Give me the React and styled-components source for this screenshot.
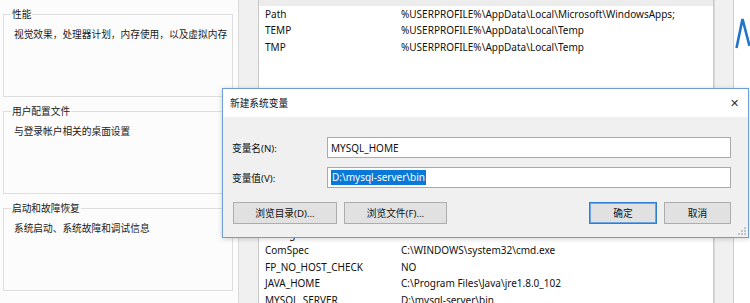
import styled, { createGlobalStyle } from 'styled-components'

const GlobalStyle = createGlobalStyle`
  html, body {
    margin: 0;
    padding: 0;
    background: #fff;
  }
  body {
    font-family: "Noto Sans", "Noto Sans CJK SC", sans-serif;
    color: #111;
  }
`

const Screen = styled.div`
  position: relative;
  width: 750px;
  height: 303px;
  overflow: hidden;
  display: flex;
  background: #fff;
`

/* left window: system properties, advanced tab */
const LeftPane = styled.div`
  width: 238px;
  flex: none;
  box-sizing: border-box;
  padding: 8px 5px 0 3px;
  display: flex;
  flex-direction: column;
  gap: 8px;
  background: #fcfcfc;
`

const Group = styled.fieldset`
  margin: 0;
  height: 89px;
  min-width: 0;
  box-sizing: border-box;
  border: 1px solid #dedede;
  padding: 8px 6px 0 10px;
`

const GroupTitle = styled.legend`
  margin-left: -3px;
  padding: 0 1px;
  font-family: "Noto Sans CJK SC", sans-serif;
  font-size: 9.7px;
  line-height: 12px;
  color: #1a1a1a;
`

const GroupText = styled.div`
  font-family: "Noto Sans CJK SC", sans-serif;
  font-size: 9.7px;
  line-height: 12px;
  color: #1a1a1a;
  white-space: nowrap;
`

/* environment variables window behind the dialog */
const FrameStrip = styled.div`
  width: 20px;
  flex: none;
  box-sizing: border-box;
  background: #f0f0f0;
  border-left: 1px solid #d9d9d9;
  border-right: ${(p) => (p.$right ? '1px solid #cfcfcf' : 'none')};
`

const CenterCol = styled.div`
  width: 456px;
  flex: none;
  display: flex;
  flex-direction: column;
  background: #f0f0f0;
`

const ListBox = styled.div`
  box-sizing: border-box;
  background: #fff;
  border: 1px solid #c9c9c9;
  margin-top: ${(p) => p.$top}px;
  height: ${(p) => (p.$height ? `${p.$height}px` : 'auto')};
  flex: ${(p) => (p.$height ? 'none' : '1')};
  border-bottom: ${(p) => (p.$height ? '1px solid #c9c9c9' : 'none')};
`

const Row = styled.div`
  display: grid;
  grid-template-columns: 136px 1fr;
  height: 16.5px;
  line-height: 16.5px;
  padding-left: 6px;
  font-size: 10px;
  color: #111;
  white-space: nowrap;
  background: ${(p) => (p.$selected ? '#ececec' : 'transparent')};
`

const Desktop = styled.div`
  flex: 1;
  background: #fff;
  padding-top: 16px;
  padding-left: 1px;
`

/* the new system variable dialog */
const Dialog = styled.div`
  position: absolute;
  left: 222px;
  top: 88px;
  width: 527px;
  height: 150px;
  box-sizing: border-box;
  border: 1px solid #6f9dd8;
  background: #f0f0f0;
  box-shadow: 0 1px 5px rgba(0, 0, 0, 0.18);
  display: flex;
  flex-direction: column;
  font-family: "Noto Sans", "Noto Sans CJK SC", sans-serif;
`

const TitleBar = styled.div`
  height: 28px;
  flex: none;
  display: flex;
  align-items: center;
  justify-content: space-between;
  padding-left: 7px;
  background: #fff;
`

const Title = styled.span`
  font-family: "Noto Sans CJK SC", sans-serif;
  font-size: 9.7px;
  color: #111;
`

const CloseButton = styled.span`
  width: 27px;
  text-align: center;
  font-family: "DejaVu Sans", sans-serif;
  font-size: 11px;
  color: #333;
`

const Body = styled.div`
  flex: 1;
  display: flex;
  flex-direction: column;
  padding: 20px 17px 0 9px;
`

const FieldRow = styled.div`
  display: flex;
  align-items: center;
  margin-top: ${(p) => p.$gap || 0}px;
`

const Label = styled.span`
  width: 95px;
  flex: none;
  font-size: 9.7px;
  color: #111;
`

const TextBox = styled.div`
  flex: 1;
  height: 21px;
  box-sizing: border-box;
  border: 1px solid #a9a9a9;
  background: #fff;
  display: flex;
  align-items: center;
  padding-left: 3px;
  font-size: 10px;
  color: #111;
`

const Selection = styled.span`
  background: #0a78d7;
  color: #fff;
  line-height: 15px;
  padding: 0 1px;
`

const ButtonRow = styled.div`
  display: flex;
  gap: 7px;
  margin-top: 14px;
  padding-left: 1px;
`

const Button = styled.div`
  width: ${(p) => p.$w}px;
  height: 22px;
  box-sizing: border-box;
  border: 1px solid ${(p) => (p.$primary ? '#2c7fd2' : '#adadad')};
  box-shadow: ${(p) => (p.$primary ? 'inset 0 0 0 1px #6aa6e6' : 'none')};
  background: #e1e1e1;
  display: flex;
  align-items: center;
  justify-content: center;
  font-size: 9.7px;
  color: #111;
`

const Spacer = styled.div`
  flex: 1;
`

const Grip = styled.svg`
  position: absolute;
  right: 1px;
  bottom: 1px;
`

const userVars = [
  ['', '', true],
  ['Path', '%USERPROFILE%\\AppData\\Local\\Microsoft\\WindowsApps;'],
  ['TEMP', '%USERPROFILE%\\AppData\\Local\\Temp'],
  ['TMP', '%USERPROFILE%\\AppData\\Local\\Temp'],
]

const systemVars = [
  ['变量', '值'],
  ['asl.log', 'Destination=file'],
  ['ComSpec', 'C:\\WINDOWS\\system32\\cmd.exe'],
  ['FP_NO_HOST_CHECK', 'NO'],
  ['JAVA_HOME', 'C:\\Program Files\\Java\\jre1.8.0_102'],
  ['MYSQL_SERVER', 'D:\\mysql-server\\bin'],
]

const App = () => {
  return (
    <Screen>
      <GlobalStyle />
      <LeftPane>
        <Group>
          <GroupTitle>性能</GroupTitle>
          <GroupText>视觉效果，处理器计划，内存使用，以及虚拟内存</GroupText>
        </Group>
        <Group>
          <GroupTitle>用户配置文件</GroupTitle>
          <GroupText>与登录帐户相关的桌面设置</GroupText>
        </Group>
        <Group>
          <GroupTitle>启动和故障恢复</GroupTitle>
          <GroupText>系统启动、系统故障和调试信息</GroupText>
        </Group>
      </LeftPane>

      <FrameStrip />

      <CenterCol>
        <ListBox $top={-12} $height={110}>
          {userVars.map(([name, value, selected], i) => (
            <Row key={i} $selected={selected}>
              <span>{name}</span>
              <span>{value}</span>
            </Row>
          ))}
        </ListBox>
        <ListBox $top={110}>
          {systemVars.map(([name, value]) => (
            <Row key={name}>
              <span>{name}</span>
              <span>{value}</span>
            </Row>
          ))}
        </ListBox>
      </CenterCol>

      <FrameStrip $right />

      <Desktop>
        <svg width="15" height="34" viewBox="0 0 15 34">
          <path d="M1.5 32 L7.5 3 L14.5 30" fill="none" stroke="#2274c9" strokeWidth="2.6" />
        </svg>
      </Desktop>

      <Dialog>
        <TitleBar>
          <Title>新建系统变量</Title>
          <CloseButton>✕</CloseButton>
        </TitleBar>
        <Body>
          <FieldRow>
            <Label>变量名(N):</Label>
            <TextBox>MYSQL_HOME</TextBox>
          </FieldRow>
          <FieldRow $gap={9}>
            <Label>变量值(V):</Label>
            <TextBox>
              <Selection>D:\mysql-server\bin</Selection>
            </TextBox>
          </FieldRow>
          <ButtonRow>
            <Button $w={104}>浏览目录(D)...</Button>
            <Button $w={103}>浏览文件(F)...</Button>
            <Spacer />
            <Button $w={68} $primary>确定</Button>
            <Button $w={67}>取消</Button>
          </ButtonRow>
        </Body>
        <Grip width="10" height="10" viewBox="0 0 10 10">
          <rect x="7" y="1" width="2" height="2" fill="#c4c4c4" />
          <rect x="4" y="4" width="2" height="2" fill="#c4c4c4" />
          <rect x="7" y="4" width="2" height="2" fill="#c4c4c4" />
          <rect x="1" y="7" width="2" height="2" fill="#c4c4c4" />
          <rect x="4" y="7" width="2" height="2" fill="#c4c4c4" />
          <rect x="7" y="7" width="2" height="2" fill="#c4c4c4" />
        </Grip>
      </Dialog>
    </Screen>
  )
}

export default App
